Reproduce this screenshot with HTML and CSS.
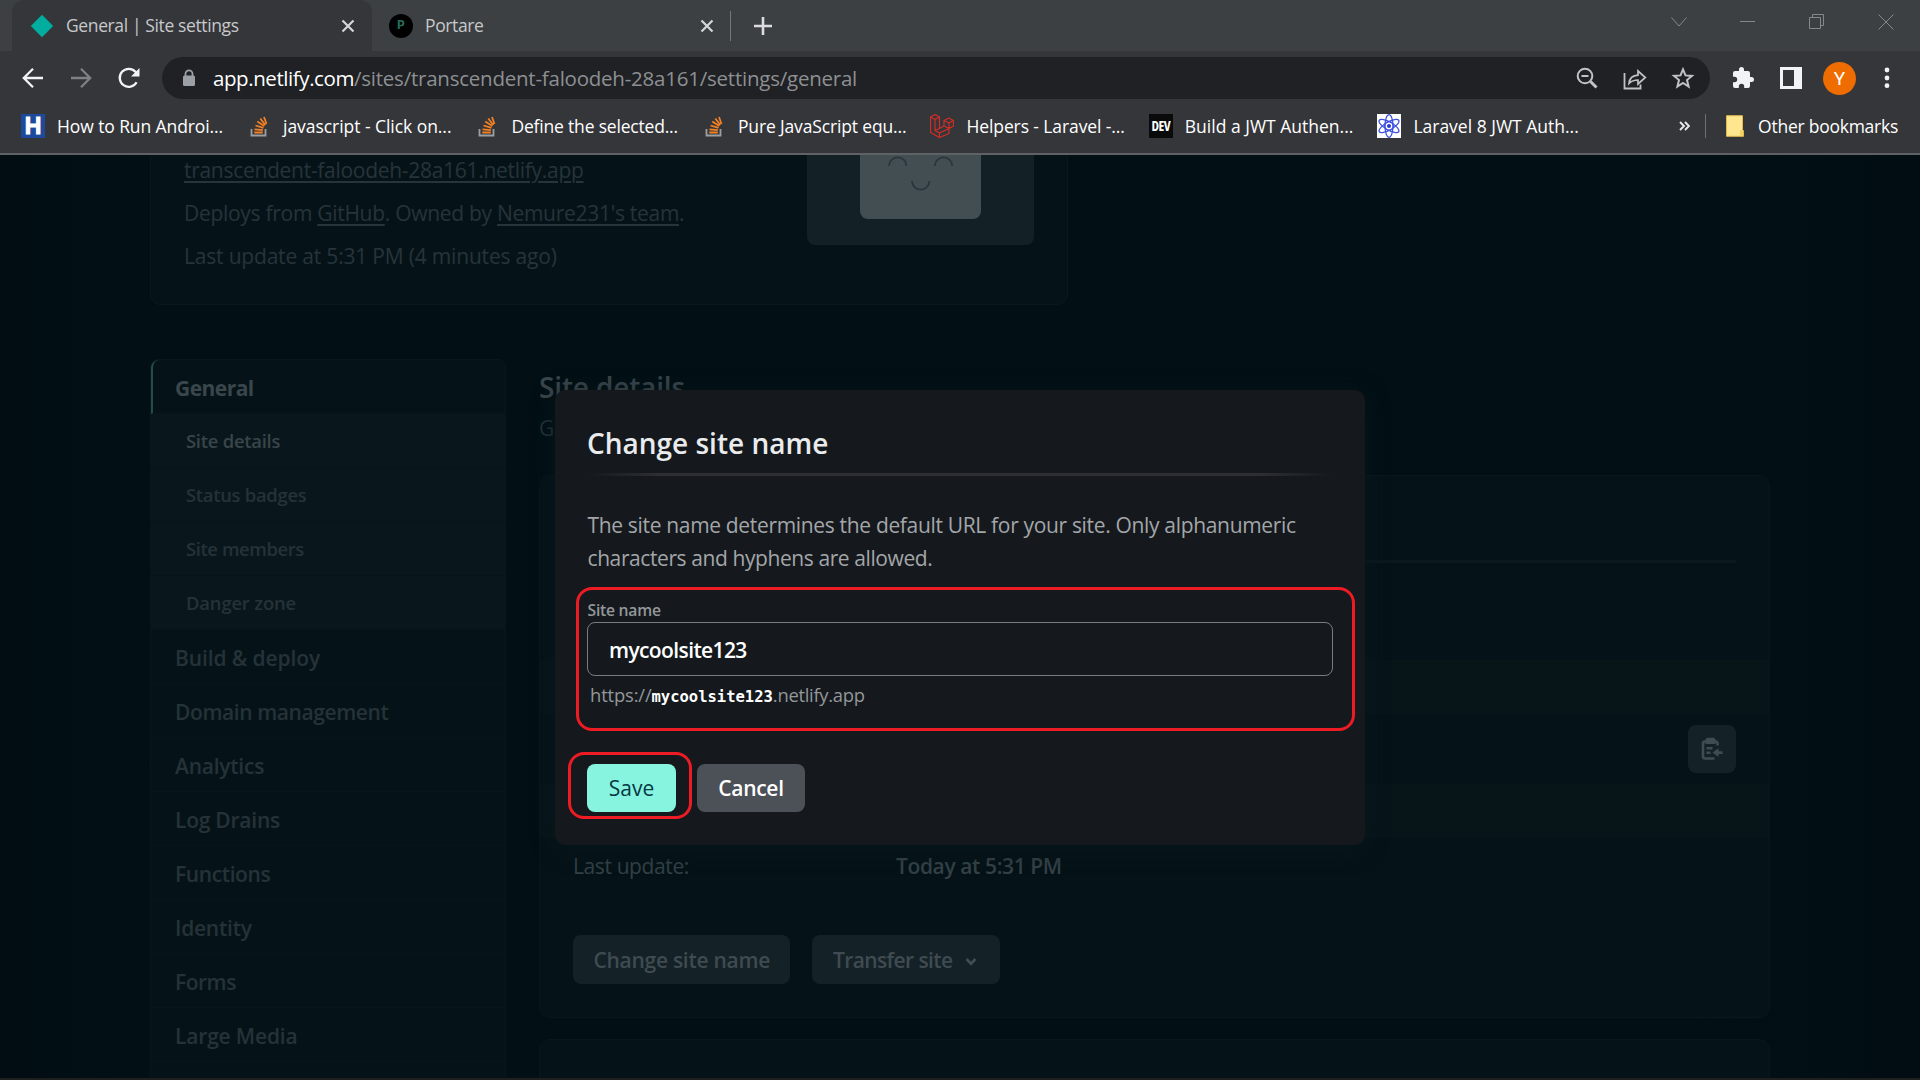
FILE: index.html
```html
<!DOCTYPE html>
<html lang="en">
<head>
<meta charset="utf-8">
<title>General | Site settings</title>
<link rel="stylesheet" href="styles.css">
</head>
<body>
<header class="browser">
  <div class="tabstrip">
    <div class="tab tab-active">
      <svg class="favicon" viewBox="0 0 24 24"><path d="M12 .8 23.2 12 12 23.2.8 12z" fill="#00ad9f"/></svg>
      <span class="tab-title ls-36">General | Site settings</span>
      <svg class="tab-close" viewBox="0 0 14 14"><path d="M1.5 1.5l11 11M12.500 1.500l-11 11"/></svg>
    </div>
    <div class="tab">
      <span class="favicon favicon-p">P</span>
      <span class="tab-title ls-38">Portare</span>
      <svg class="tab-close" viewBox="0 0 14 14"><path d="M1.500 1.500l11 11M12.500 1.500l-11 11"/></svg>
    </div>
    <span class="tab-sep"></span>
    <svg class="newtab" viewBox="0 0 20 20"><path d="M10 1v18M1 10h18"/></svg>
    <div class="window-controls">
      <svg viewBox="0 0 16 16"><path d="M.5 3.500 8 12l7.500-8.500"/></svg>
      <svg viewBox="0 0 16 16"><path d="M0 7.500h15"/></svg>
      <svg viewBox="0 0 16 16"><path d="M.5 3.500h11v11H.5zM3.500 3.500v-3h11v11h-3"/></svg>
      <svg viewBox="0 0 16 16"><path d="M.5.5l15 15M15.500.5l-15 15"/></svg>
    </div>
  </div>

  <div class="toolbar">
    <svg class="nav" viewBox="0 0 22 22"><path d="M21 11H2.500M11 1.800 1.800 11l9.200 9.200"/></svg>
    <svg class="nav nav-off" viewBox="0 0 22 22"><path d="M1 11h18.500M11 1.800l9.200 9.200-9.200 9.200"/></svg>
    <svg class="nav" viewBox="0 0 22 22"><path d="M18.600 15.200A9 9 0 1 1 17.400 4.700L19.500 6.800"/><path d="M21.500 1v8.500H13z" class="solid"/></svg>
    <div class="omnibox">
      <svg class="lock" viewBox="0 0 14 18"><path d="M3.500 8V4.800a3.500 3.500 0 0 1 7 0V8" fill="none" stroke="#9aa0a6" stroke-width="1.800"/><rect x="1" y="6.500" width="12" height="10.500" rx="1.500" fill="#9aa0a6"/></svg>
      <span class="url"><span class="host">app.netlify.com</span><span class="path">/sites/transcendent-faloodeh-28a161/settings/general</span></span>
      <div class="omni-actions">
        <svg viewBox="0 0 24 24"><circle cx="10" cy="10" r="7.300"/><path d="M15.500 15.500l6 6" stroke-width="3"/><path d="M6.500 10h7"/></svg>
        <svg viewBox="0 0 24 24"><path d="M1.500 7v15.500h16v-4" stroke-width="1.800"/><path d="M6 17.500c.5-5.500 4-8 9-8.300V5l7.300 6.500-7.300 6.500v-4c-4 0-6.500 1-9 3.500z" stroke-width="1.700"/></svg>
        <svg viewBox="0 0 24 24"><path d="M12 3.300l2.500 6.100 6.500.5-5 4.200 1.600 6.400L12 17l-5.600 3.500L8 14.100 3 9.900l6.500-.5z"/></svg>
      </div>
    </div>
    <svg class="puzzle" viewBox="0 0 24 24"><path fill="#f1f3f4" d="M20.500 11H19V7a2 2 0 0 0-2-2h-4V3.500a2.500 2.500 0 0 0-5 0V5H4a2 2 0 0 0-2 2v3.800h1.500a2.700 2.700 0 0 1 0 5.400H2V20a2 2 0 0 0 2 2h3.800v-1.500a2.700 2.700 0 0 1 5.400 0V22H17a2 2 0 0 0 2-2v-4h1.500a2.500 2.500 0 0 0 0-5z"/></svg>
    <svg class="panel" viewBox="0 0 22 22"><path fill="#f1f3f4" fill-rule="evenodd" d="M0 0h22v22H0zM3 3v16h11V3z"/></svg>
    <span class="avatar">Y</span>
    <svg class="dots" viewBox="0 0 6 22"><g fill="#f1f3f4"><circle cx="3" cy="3" r="2.400"/><circle cx="3" cy="11" r="2.400"/><circle cx="3" cy="18.700" r="2.400"/></g></svg>
  </div>

  <nav class="bookmarks">
    <a class="bm"><span class="bm-icon icon-h">H</span><span class="ls-10">How to Run Androi...</span></a>
    <a class="bm"><svg class="bm-icon" viewBox="0 0 24 24"><path d="M4.500 15v6.500h14V15" fill="none" stroke="#9c9fa2" stroke-width="1.800"/><path d="M7.300 18.500h8.500M7.500 15.300l8.400.9M8.500 11.500l8 2.300M10.300 7.500l7 4.500M13.300 4.500l5 6.500M17 3l2.500 7" stroke="#f48024" stroke-width="1.800"/></svg><span class="ls-05">javascript - Click on...</span></a>
    <a class="bm"><svg class="bm-icon" viewBox="0 0 24 24"><path d="M4.500 15v6.500h14V15" fill="none" stroke="#9c9fa2" stroke-width="1.800"/><path d="M7.300 18.500h8.500M7.500 15.300l8.400.9M8.500 11.500l8 2.300M10.300 7.500l7 4.500M13.300 4.500l5 6.500M17 3l2.500 7" stroke="#f48024" stroke-width="1.800"/></svg><span class="ls-19">Define the selected...</span></a>
    <a class="bm"><svg class="bm-icon" viewBox="0 0 24 24"><path d="M4.500 15v6.500h14V15" fill="none" stroke="#9c9fa2" stroke-width="1.800"/><path d="M7.300 18.500h8.500M7.500 15.300l8.400.9M8.500 11.500l8 2.300M10.300 7.500l7 4.500M13.300 4.500l5 6.500M17 3l2.500 7" stroke="#f48024" stroke-width="1.800"/></svg><span class="ls-15">Pure JavaScript equ...</span></a>
    <a class="bm"><svg class="bm-icon" viewBox="0 0 24 24"><path fill="none" stroke="#d82c25" stroke-width="1.100" stroke-linejoin="round" d="M.6 3 5 .6 9.500 3v11.500L14 12V6.500L18.800 4l4.600 2.500V12L19 14.500v5l-9.500 4L.6 18.500zM.6 3 5 5.500 9.500 3M5 5.500V16.500l4.500 2.500L19 14.500M5 16.500l4.500-2M9.500 19v4.500M14 6.500l5 2.500 4.400-2.500M19 9v5.500L14 12"/></svg><span class="ls-10">Helpers - Laravel -...</span></a>
    <a class="bm"><span class="bm-icon icon-dev">DEV</span><span>Build a JWT Authen...</span></a>
    <a class="bm"><svg class="bm-icon" viewBox="0 0 24 24"><path fill="#fff" d="M0 0h24v24H0z"/><g fill="none" stroke="#3b4fe0" stroke-width="1.200"><ellipse cx="12" cy="12" rx="4" ry="11.300"/><ellipse cx="12" cy="12" rx="4" ry="11.300" transform="rotate(60 12 12)"/><ellipse cx="12" cy="12" rx="4" ry="11.300" transform="rotate(120 12 12)"/><circle cx="12" cy="12" r="4.300"/></g><circle cx="12" cy="12" r="2" fill="#2438d8"/></svg><span>Laravel 8 JWT Auth...</span></a>
    <div class="bm-end">
      <svg class="more" viewBox="0 0 11 10"><path d="M1 1l4 4-4 4M6 1l4 4-4 4"/></svg>
      <span class="bm-sep"></span>
      <svg class="folder" viewBox="0 0 18 22"><path fill="#ffe68f" stroke="#e0bb4a" d="M.5.700h16v14l1 1v5.600H.5z"/><path fill="#f6d365" d="M14 15h3v6h-3z"/></svg>
      <span class="ls-25">Other bookmarks</span>
    </div>
  </nav>
</header>

<main class="page">
  <section class="site-card">
    <div class="site-meta">
      <p class="ls-29"><u>transcendent-faloodeh-28a161.netlify.app</u></p>
      <p class="ls-29">Deploys from <u>GitHub</u>. Owned by <u>Nemure231's team</u>.</p>
      <p class="ls-19">Last update at 5:31 PM (4 minutes ago)</p>
    </div>
    <div class="preview">
      <svg viewBox="0 0 121 64"><path fill="#434e53" d="M0 0h121v56a8 8 0 0 1-8 8H8a8 8 0 0 1-8-8z"/><path fill="none" stroke="#29363b" stroke-width="1.800" d="M29 11a8.700 8.700 0 0 1 17.400 0M74.800 11a8.700 8.700 0 0 1 17.400 0M52 26a8.700 8.700 0 0 0 17.400 0"/></svg>
    </div>
  </section>

  <div class="columns">
    <nav class="side">
      <a class="item current ls-52">General</a>
      <a class="sub sub-on ls-24">Site details</a>
      <a class="sub ls-28">Status badges</a>
      <a class="sub ls-39">Site members</a>
      <a class="sub ls-15">Danger zone</a>
      <a class="item ls-10">Build &amp; deploy</a>
      <a class="item ls-40">Domain management</a>
      <a class="item ls-24">Analytics</a>
      <a class="item ls-24">Log Drains</a>
      <a class="item ls-39">Functions</a>
      <a class="item ls-24">Identity</a>
      <a class="item ls-49">Forms</a>
      <a class="item ls-17">Large Media</a>
      <a class="item"></a>
    </nav>
    <div class="content">
      <h2>Site details</h2>
      <p class="lead">G</p>
      <section class="panel-card">
        <div class="rule"></div>
        <div class="row"></div>
        <div class="row row-alt"></div>
        <div class="row row-tall">
          <span class="copy"><svg viewBox="0 0 24 24"><path d="M17.500 8.500V6.500A2 2 0 0 0 15.500 4.500H5A2 2 0 0 0 3 6.500v13a2 2 0 0 0 2 2h9.500" fill="none" stroke="#414c51" stroke-width="2.600"/><path fill="#414c51" d="M7 .8h7l1.500 1.700V7H5.500V2.500zM6.500 10h6v2.500h-6zM6.500 14.500h4V17h-4zM12.500 15.500l6-4.300v3h4v2.700h-4v3z"/></svg></span>
        </div>
        <div class="row row-alt"></div>
        <div class="row row-text"><span class="key ls-39">Last update:</span><span class="val ls-39">Today at 5:31 PM</span></div>
        <div class="card-actions">
          <span class="btn ls-28">Change site name</span>
          <span class="btn ls-61">Transfer site<svg viewBox="0 0 12 9"><path d="M1.500 2 6 6.800 10.500 2" fill="none" stroke="#414c51" stroke-width="2.800"/></svg></span>
        </div>
      </section>
      <section class="panel-card next-card"></section>
    </div>
  </div>
</main>

<div class="dialog">
  <h1>Change site name</h1>
  <div class="dialog-rule"></div>
  <p class="copytext"><span class="ls-33">The site name determines the default URL for your site. Only alphanumeric</span><br><span class="ls-40">characters and hyphens are allowed.</span></p>
  <div class="label ls-24">Site name</div>
  <div class="field ls-61">mycoolsite123</div>
  <div class="hint"><span class="ls-15">https://</span><code>mycoolsite123</code><span class="ls-28">.netlify.app</span></div>
  <div class="dialog-actions"><span class="dbtn save">Save</span><span class="dbtn cancel">Cancel</span></div>
  <div class="mark mark-field"></div>
  <div class="mark mark-save"></div>
</div>
</body>
</html>
```
FILE: styles.css
```css
* { box-sizing: border-box; }
body { margin: 0; width: 1920px; height: 1080px; overflow: hidden; display: flex; flex-direction: column; background: #020f14; font-family: "Open Sans", "Noto Sans", sans-serif; font-size: 21px; }
p, h1, h2 { margin: 0; }
svg { display: block; flex: none; }
span, a { white-space: nowrap; }

.ls-05 { letter-spacing: -.05px; }
.ls-10 { letter-spacing: -.1px; }
.ls-15 { letter-spacing: -.15px; }
.ls-17 { letter-spacing: -.17px; }
.ls-19 { letter-spacing: -.19px; }
.ls-24 { letter-spacing: -.24px; }
.ls-25 { letter-spacing: -.25px; }
.ls-28 { letter-spacing: -.28px; }
.ls-29 { letter-spacing: -.29px; }
.ls-33 { letter-spacing: -.33px; }
.ls-36 { letter-spacing: -.38px; }
.ls-38 { letter-spacing: -.38px; }
.ls-39 { letter-spacing: -.39px; }
.ls-40 { letter-spacing: -.41px; }
.ls-49 { letter-spacing: -.49px; }
.ls-52 { letter-spacing: -.54px; }
.ls-61 { letter-spacing: -.61px; }

/* Browser window frame */
.browser { height: 155px; flex: none; background: #35363a; border-bottom: 2px solid #5f6164; font-size: 17.5px; color: #fff; }
.tabstrip { height: 51px; display: flex; align-items: center; background: linear-gradient(90deg, #35363a 12px, transparent 12px) 0 0 no-repeat, #3c4043; background-size: 0 0, auto; padding-left: 12px; }
.tab { height: 51px; width: 360px; display: flex; align-items: center; padding: 0 18px; color: #c6c8ca; }
.tab-active { background: #35363a; border-radius: 12px 12px 0 0; }
.tab + .tab { width: 357px; padding: 0 15px 0 17px; }
.favicon { width: 24px; height: 24px; margin-right: 12px; }
.favicon-p { background: #000; border-radius: 50%; color: #24705f; font: 700 13px/24px "Liberation Mono", monospace; text-align: center; }
.tab-title { flex: 1; line-height: 24px; padding-bottom: 1px; }
.tab-close { width: 14px; height: 14px; stroke: #d4d6d8; stroke-width: 2.2; }
.tab-active .tab-close { margin-right: -1px; }
.tab-sep { width: 1px; height: 30px; margin-left: 1px; background: #74777a; }
.newtab { width: 20px; height: 20px; margin-left: 22px; stroke: #dcdddf; stroke-width: 2.6; }
.window-controls { margin: -8px 26px 0 auto; display: flex; gap: 53px; }
.window-controls svg { width: 16px; height: 16px; fill: none; stroke: #85888b; stroke-width: 1; }

.toolbar { height: 54px; display: flex; align-items: center; padding-left: 22px; }
.nav { width: 22px; height: 22px; margin-right: 26px; fill: none; stroke: #f1f3f4; stroke-width: 2.3; }
.nav .solid { fill: #f1f3f4; stroke: none; }
.nav-off { stroke: #7f8184; }
.omnibox { width: 1548px; height: 42px; margin-left: -4px; border-radius: 21px; background: #202124; display: flex; align-items: center; padding: 0 15px 0 20px; }
.lock { width: 14px; height: 18px; margin-right: 17px; }
.url { font-size: 20.5px; }
.host { color: #fff; letter-spacing: -.42px; }
.path { color: #8d9093; letter-spacing: -.23px; }
.omni-actions { margin-left: auto; display: flex; gap: 24px; }
.omni-actions svg { width: 24px; height: 24px; fill: none; stroke: #c0c2c4; stroke-width: 2; }
.puzzle { width: 24px; height: 24px; margin-left: 21px; }
.panel { width: 22px; height: 22px; margin-left: 25px; }
.avatar { width: 33px; height: 33px; margin-left: 21px; border-radius: 50%; background: #ef6c00; font: 19px/34px Roboto, sans-serif; text-align: center; }
.dots { width: 6px; height: 22px; margin-left: 28px; }

.bookmarks { height: 42px; display: flex; align-items: center; padding: 0 22px 0 21px; gap: 24px; }
.bm { display: flex; align-items: center; gap: 12px; }
.bm > span:last-child, .bm-end > span:last-child { padding-bottom: 1px; }
.bm-icon { width: 24px; height: 24px; }
.icon-h { background: #1d4a9c; font: 700 23px/24px "Liberation Sans", sans-serif; text-align: center; -webkit-text-stroke: 1px #fff; }
.icon-dev { background: #0a0a0a; font: 700 13.5px/25px "Open Sans", sans-serif; font-stretch: 75%; letter-spacing: -.5px; text-align: center; }
.bm-end { margin-left: auto; display: flex; align-items: center; }
.more { width: 11px; height: 10px; fill: none; stroke: #e8eaed; stroke-width: 1.9; margin-right: 15px; }
.bm-sep { width: 1px; height: 24px; background: #6d7073; margin-right: 20px; }
.folder { width: 18px; height: 22px; margin-right: 14px; }

/* Dimmed settings page */
.page { flex: 1; min-height: 0; overflow: hidden; padding-left: 150px; border-bottom: 2px solid #201f20; background: linear-gradient(90deg, #010d12, #021015 8%, #021015 88%, #010d12); }
.site-card { width: 918px; height: 150px; display: flex; justify-content: space-between; border: 1px solid #09181d; border-top: 0; border-radius: 0 0 11px 11px; background: #051318; padding: 0 33px; color: #27343a; }
.site-meta { margin-top: -6px; line-height: 43px; }
.site-meta u { text-underline-offset: 3px; text-decoration-thickness: 2px; text-decoration-skip-ink: auto; }
.preview { width: 227px; height: 90px; background: #132025; border-radius: 0 0 8px 8px; display: flex; justify-content: center; }
.preview svg { width: 121px; height: 64px; }
.columns { margin-top: 54px; display: flex; gap: 33px; align-items: flex-start; }
.side { width: 356px; border: 1px solid #08171c; border-radius: 8px; background: #051318; }
.side a { display: block; height: 54px; line-height: 57px; font-weight: 600; border-bottom: 1px solid #07161b; color: #253238; }
.side .item { padding-left: 24px; }
.side .current { font-weight: 700; color: #3a464b; border-left: 2px solid #214e4b; border-radius: 8px 0 0 0; padding-left: 22px; }
.side .sub { font-size: 18.4px; line-height: 53px; padding-left: 35px; background: #09171c; border-color: #06141a; }
.side .sub-on { color: #38454a; }
.content { width: 1231px; }
h2 { font-size: 28px; font-weight: 600; line-height: 56px; color: #3a464b; letter-spacing: -.15px; }
.lead { height: 26px; line-height: 26px; color: #253238; }
.panel-card { margin-top: 34px; height: 543px; border: 1px solid #08171c; border-radius: 11px; background: #051318; padding-top: 84px; }
.next-card { margin-top: 21px; }
.rule { height: 3px; margin: 0 33px 43px; background: #09191e; }
.row { height: 54px; display: flex; align-items: center; padding: 0 33px; color: #344147; }
.row-alt { background: #071519; }
.row-tall { height: 70px; justify-content: flex-end; }
.row-text { padding-top: 2px; }
.copy { width: 48px; height: 48px; border-radius: 8px; background: #142126; display: grid; place-items: center; }
.copy svg { width: 24px; height: 24px; }
.key { width: 323px; }
.val { font-weight: 600; }
.card-actions { margin-top: 43px; padding-left: 33px; display: flex; gap: 22px; }
.btn { height: 49px; display: flex; align-items: center; padding: 0 20.5px; border-radius: 8px; background: #142126; color: #3f4b50; font-weight: 600; }
.btn svg { width: 12px; height: 9px; margin: 4px 2px 0 13px; }

/* Modal */
.dialog { position: absolute; left: 555px; top: 390px; width: 810px; height: 455px; border-radius: 11px; background: #15191d; padding: 33px 32px 0; box-shadow: 0 4px 22px rgba(8, 24, 29, .7); }
h1 { margin: 0; font-size: 28px; font-weight: 600; line-height: 40px; color: #e9ebed; letter-spacing: 0; }
.dialog-rule { height: 3px; margin-top: 10px; background: linear-gradient(90deg, transparent, #2d2f33 10%, #2d2f33 90%, transparent); }
.copytext { margin-top: 33px; padding-left: .5px; line-height: 33px; color: #a3a6a9; }
.label { margin-top: 24px; height: 23px; line-height: 23px; padding-left: .5px; font-size: 15.7px; font-weight: 600; color: #94979a; }
.field { height: 54px; border: 1px solid #797d81; border-radius: 8px; padding-left: 21px; line-height: 54px; font-weight: 600; color: #fff; }
.hint { height: 38px; line-height: 38px; padding-left: 3px; font-size: 18.4px; color: #94979a; }
.hint code { font: 700 15.5px/38px "DejaVu Sans Mono", monospace; color: #fff; }
.dialog-actions { margin-top: 50px; display: flex; gap: 21px; }
.dbtn { height: 48px; line-height: 48px; border-radius: 8px; text-align: center; }
.save { width: 89px; background: #87f4df; color: #063744; }
.cancel { width: 108px; background: #4c5057; color: #fff; font-weight: 600; letter-spacing: -.29px; }
.mark { position: absolute; border: 3px solid #ed1c24; }
.mark-field { left: 21px; top: 197px; width: 779px; height: 144px; border-radius: 16px; }
.mark-save { left: 13px; top: 362px; width: 124px; height: 67px; border-radius: 16px; }
```
